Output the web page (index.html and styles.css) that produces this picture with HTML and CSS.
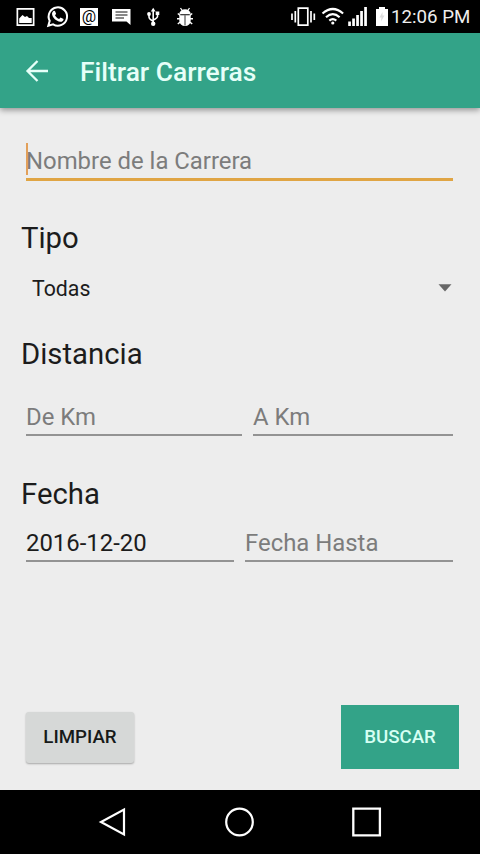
FILE: index.html
```html
<!DOCTYPE html>
<html lang="es">
<head>
<meta charset="utf-8">
<title>Filtrar Carreras</title>
<link rel="stylesheet" href="styles.css">
</head>
<body>
<div class="status">
  <div class="notifications">
    <svg width="32" height="33" viewBox="0 0 32 33"><path fill="#fff" fill-rule="evenodd" d="M7.500 8h18v18h-18zM9.200 9.700v14.500h14.600V9.700z"/><path fill="#fff" d="M10.200 23v-4.500l3.300-3.500 2.500 2 2-1 2 2h2.700v5z"/></svg>
    <svg width="32" height="33" viewBox="0 0 32 33"><path fill="none" stroke="#fff" stroke-width="2" d="M7.300 25.800l1.400-5a9.200 9.200 0 1 1 3.400 3.600z"/><path fill="#fff" d="M12.200 11.300c.8-.8 1.700-.5 2 .2l.8 2c.2.600-.6 1.300-1 1.700 1 1.900 2.300 3 4.200 3.800l1.300-1.500 3.100 1.500c-.1 2-1.700 3-3.300 2.800-4.300-.7-7.600-4-8.200-7.300-.2-1.300.2-2.400 1.100-3.200z"/></svg>
    <span class="mail"><span class="mail-box">@</span></span>
    <svg width="32" height="33" viewBox="0 0 32 33"><path fill="#fff" d="M7 9h18.500v16l-4-3.500H7z"/><path stroke="#111" stroke-width="1" d="M10.500 12h12M10.500 15h12M10.500 18h8.500"/></svg>
    <svg width="32" height="33" viewBox="0 0 32 33"><g fill="none" stroke="#fff" stroke-width="1.600"><path d="M16.200 10v14M12 14v3q0 2 4.200 4.200M20.500 13.500v3q0 1.500-4.300 3.500"/></g><path fill="#fff" d="M13.800 11.500l2.400-3.800 2.400 3.800zM18.700 11.500h3.600v3.500h-3.600z"/><circle cx="12" cy="14" r="1.900" fill="#fff"/><circle cx="16.200" cy="23.800" r="2.200" fill="#fff"/></svg>
    <svg width="32" height="33" viewBox="0 0 32 33"><path fill="#fff" d="M10.300 14.300a5.700 5 0 0 1 11.400 0zM10.300 15.300h11.400v5.200a5.700 5.500 0 0 1-11.400 0z"/><path fill="none" stroke="#fff" stroke-width="1.300" d="M11.500 8l2 3M20.500 8l-2 3"/><path fill="none" stroke="#fff" stroke-width="1.500" d="M8.800 13.500l2.500 2M23.200 13.500l-2.500 2M8 18.800h16M8.800 24l3-2.500M23.200 24l-3-2.500"/><path stroke="#000" stroke-width=".8" d="M16 15.300V25.500"/></svg>
  </div>
  <svg width="102" height="33" viewBox="288 0 102 33"><g fill="none" stroke="#fff" stroke-width="1.700"><path d="M298.300 8.200h9.500v17h-9.500zM295.300 11v11.500M292 13.500v6.500M311 11v11.500M314.300 13.500v6.500"/><g stroke-width="2.200"><path d="M322.500 13.500q10.300-9 20.600 0M326 17.200q6.800-6 13.600 0M329.300 20.600q3.500-3 7 0"/></g></g><circle cx="332.800" cy="23" r="1.600" fill="#fff"/><path fill="#fff" d="M348.200 21.500h2.700V26h-2.700zM352.200 18.500h2.700V26h-2.700zM356.200 15h2.700v11h-2.700zM360.200 11h2.700v15h-2.700zM364.200 7h2.700v19h-2.700zM376 9h3V7h6v2h3v17h-12z"/><path fill="#ddd" d="M382.500 12l-3 5.500h2l-.5 4 3.500-6h-2z"/></svg>
  <time class="clock">12:06 PM</time>
</div>
<header class="appbar">
  <svg width="24" height="24" viewBox="0 0 24 24"><path fill="none" stroke="#e6fff8" stroke-width="2.300" d="M23 12H3M12.500 2L2.500 12l10 10"/></svg>
  <h1>Filtrar Carreras</h1>
</header>
<main>
  <div class="field active"><span class="caret"></span>Nombre de la Carrera</div>
  <h2 class="tipo">Tipo</h2>
  <div class="select"><span>Todas</span><svg width="14" height="8" viewBox="0 0 14 8"><path fill="#686868" d="M.5.300h13L7 7.500z"/></svg></div>
  <h2 class="distancia">Distancia</h2>
  <div class="row distance"><div class="field">De Km</div><div class="field">A Km</div></div>
  <h2 class="fecha">Fecha</h2>
  <div class="row dates"><div class="field filled">2016-12-20</div><div class="field">Fecha Hasta</div></div>
  <div class="actions"><button class="clear">LIMPIAR</button><button class="search">BUSCAR</button></div>
</main>
<nav>
  <svg width="30" height="32" viewBox="0 0 30 32"><path fill="none" stroke="#fff" stroke-width="2.200" d="M26 3.500v25L3 16z"/></svg>
  <svg width="30" height="32" viewBox="0 0 30 32"><circle cx="14.500" cy="16" r="13.300" fill="none" stroke="#fff" stroke-width="2.200"/></svg>
  <svg width="30" height="32" viewBox="0 0 30 32"><path fill="none" stroke="#fff" stroke-width="2.300" d="M1.300 2.700h26.600v26.600H1.300z"/></svg>
</nav>
</body>
</html>
```
FILE: styles.css
```css
* { box-sizing: border-box; }
body {
  margin: 0;
  width: 480px;
  height: 854px;
  display: flex;
  flex-direction: column;
  overflow: hidden;
  background: #ededed;
  color: #1c1c1c;
  font-family: Roboto, sans-serif;
}
svg { display: block; flex: none; }
h1, h2 { margin: 0; }
.status {
  height: 33px;
  flex: none;
  display: flex;
  align-items: center;
  justify-content: flex-end;
  padding-left: 9px;
  background: #000;
  color: #eee;
}
.notifications { display: flex; margin-right: auto; }
.mail { width: 32px; height: 33px; display: flex; align-items: center; justify-content: center; }
.mail-box {
  width: 18px;
  height: 18px;
  background: #fff;
  color: #000;
  font-size: 16px;
  line-height: 17px;
  text-align: center;
}
.clock { width: 90px; padding: 2px 0 0 1px; font-size: 18.7px; line-height: 33px; white-space: nowrap; }
.appbar {
  height: 75px;
  flex: none;
  display: flex;
  align-items: center;
  padding: 2px 0 0 25px;
  gap: 31px;
  background: #33a388;
  box-shadow: 0 2px 6px rgba(0, 0, 0, .4);
}
.appbar svg { margin-top: -2px; }
.appbar h1 { color: #e6fff8; font-size: 26.4px; font-weight: 500; line-height: 34px; }
main { flex: 1; display: flex; flex-direction: column; padding: 33px 26px 0; }
.field {
  position: relative;
  height: 36px;
  flex: none;
  border-bottom: 2px solid #939393;
  color: #7c7c7c;
  font-size: 23.9px;
  line-height: 35px;
  white-space: nowrap;
}
.field.active { height: 40px; width: 427px; border-bottom: 3px solid #e0a544; line-height: 41px; }
.caret { position: absolute; left: 0; top: 2px; width: 2px; height: 32px; background: #e2a05a; }
.filled { color: #1c1c1c; }
h2 { height: 36px; flex: none; margin-left: -5px; font-size: 29.3px; font-weight: 400; line-height: 36px; }
.tipo { margin-top: 39px; }
.select { height: 36px; margin-top: 14px; padding: 0 2px 0 6px; display: flex; align-items: center; justify-content: space-between; font-size: 21.3px; }
.distancia { margin-top: 30px; }
.row { width: 427px; display: grid; column-gap: 11px; }
.distance { grid-template-columns: 216px 200px; margin-top: 28px; }
.fecha { margin-top: 40px; }
.dates { grid-template-columns: 208px 208px; margin-top: 14px; }
.actions { margin: auto -5px 21px 0; display: flex; justify-content: space-between; align-items: center; }
button { padding: 0; border: 0; font: 500 18.7px/24px Roboto, sans-serif; }
.clear { width: 108px; height: 51px; border-radius: 3px; background: #d6d8d7; color: #171a19; box-shadow: 0 1px 2px rgba(0, 0, 0, .3); }
.search { width: 118px; height: 64px; background: #33a388; color: #d6fff3; }
nav { height: 64px; flex: none; display: flex; justify-content: center; align-items: center; gap: 97px; background: #000; }
```
